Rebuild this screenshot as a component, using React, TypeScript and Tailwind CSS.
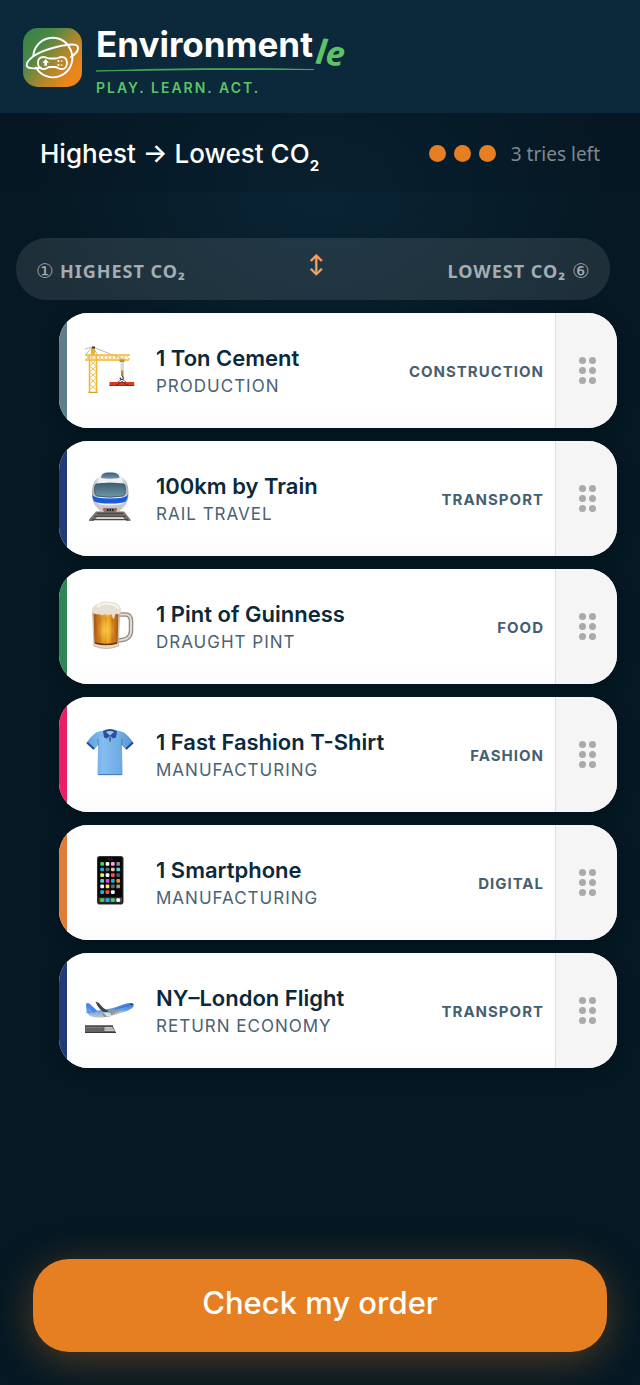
import { useState } from "react";
import type { ReactNode } from "react";
import clsx from "clsx";

interface Item {
  id: string;
  title: string;
  detail: string;
  category: string;
  accent: string;
  icon: ReactNode;
}

function CraneIcon() {
  return (
    <svg viewBox="0 0 50 50" className="size-[50px]" fill="none" aria-hidden>
      <path d="M0 6 7.7 4 38 16M7.7 4 1 11M7.7 4l5 8" stroke="#9a9a92" strokeWidth="0.7" />
      <path d="M6 4.500h4v8H6z" fill="#e9b32f" />
      <path d="M7 3.500h3v2H7z" fill="#3c3c34" />
      <path d="M0 12h45M0 17h44M4.500 12v38M11.500 12v38" stroke="#efb52f" strokeWidth="1.500" />
      <path
        d="m1 12 4 5 4-5 4 5 4-5 4 5 4-5 4 5 4-5 4 5 4-5 4 5M1 17l4-5 4 5 4-5 4 5 4-5 4 5 4-5 4 5 4-5 4 5M4.500 17l7 6-7 6 7 6-7 6 7 6M11.500 17l-7 6 7 6-7 6 7 6-7 6"
        stroke="#f0c258"
        strokeWidth="1"
      />
      <path d="M3.500 49.500h9" stroke="#d99f25" strokeWidth="1.500" />
      <path d="M35.500 18h3.500v10h-3.500z" fill="#dadada" />
      <path d="M34.500 16.500h5v2.500h-5z" fill="#c88b25" />
      <path d="M36 27.500h2.500V33H36z" fill="#b98d20" />
      <path d="M37.300 33c2 2 .7 3.800-.6 3.500-1.200 0-1.800-1-1.200-2" stroke="#333" strokeWidth="1.200" />
      <path d="m37 36-8 6M37 36l8 6" stroke="#3d3d3d" strokeWidth="0.8" />
      <path d="M24.500 39h24.700v4H24.500z" fill="#d8391f" />
      <path d="M24.500 42.500h24.700" stroke="#9f2413" />
      <path d="m31 42.500 6-4 6 4" stroke="#6b2a20" />
    </svg>
  );
}

function TrainIcon() {
  return (
    <svg viewBox="0 0 50 50" className="size-[50px]" aria-hidden>
      <defs>
        <linearGradient id="train-body" x1="0" x2="1">
          <stop stopColor="#a9abb0" />
          <stop offset=".2" stopColor="#f0f0f3" />
          <stop offset=".8" stopColor="#f0f0f3" />
          <stop offset="1" stopColor="#a2a4a9" />
        </linearGradient>
        <linearGradient id="train-glass" x2="0" y2="1">
          <stop stopColor="#3d5f70" />
          <stop offset="1" stopColor="#6d97a9" />
        </linearGradient>
      </defs>
      <path d="M11 40.500h28l6.500 8v1.500h-4L38 46H12l-3.500 4H4v-1.500z" fill="#77736d" />
      <path d="M12 42.500h26M9.500 45.500h31M7 48.500h36" stroke="#4d4944" strokeWidth="1.300" />
      <path
        d="M25 .7c7 0 10 1 11.500 5 5 3.300 7 8 7 17 0 8-4 14-9 17.300h-19C10.500 36.500 7 31 7 23c0-9 2-14 7-17.300C15.500 1.700 18 .7 25 .7Z"
        fill="url(#train-body)"
      />
      <path d="M16 7c.5-4 2-5.500 9-5.500S34 3 34.500 7c-6 1-13 1-18.500 0Z" fill="url(#train-glass)" />
      <path
        d="M11 13q14-2 28 0 1.500 1 1.500 6.500 0 4-2 5.500-13.500 2.500-27 0-2-1.500-2-5.500 0-5.500 1.500-6.500Z"
        fill="url(#train-glass)"
        stroke="#34505f"
        strokeWidth=".8"
      />
      <path d="M7.200 24q3 3.500 17.800 3.500T43 24q-.5 4.500-2.500 6.500-4 2-15.500 2t-15.500-2Q7.500 28.500 7.200 24Z" fill="#1c5bd8" />
      <path d="M10 32q6 2.500 15 2.500T40.500 32q-2 5-6 8h-19q-4-3-5.500-8Z" fill="#c7c8cd" />
      <path d="M18 37h14l-1 4H19z" fill="#77777a" />
      <path d="M22 38h1.500v2H22zm2.500 0H26v2h-1.500zm2.500 0h1.500v2H27z" fill="#222" />
      <circle cx="19.300" cy="38.500" r="1.300" fill="#e4502f" />
      <circle cx="30.700" cy="38.500" r="1.300" fill="#e4502f" />
    </svg>
  );
}

function BeerIcon() {
  return (
    <svg viewBox="0 0 50 50" className="size-[50px]" fill="none" aria-hidden>
      <defs>
        <linearGradient id="beer" x1="0" x2="1">
          <stop stopColor="#9f4f13" />
          <stop offset=".25" stopColor="#d98420" />
          <stop offset=".55" stopColor="#f0b02e" />
          <stop offset=".8" stopColor="#d17c1c" />
          <stop offset="1" stopColor="#a5541a" />
        </linearGradient>
        <radialGradient id="beer-glow">
          <stop stopColor="#ffd044" stopOpacity=".8" />
          <stop offset="1" stopColor="#ffd044" stopOpacity="0" />
        </radialGradient>
      </defs>
      <path d="M33 15.500h7.500q5 0 5.500 6v10q0 5-3.500 7.500-2.500 2-9.500 2.500" stroke="#958b7f" strokeWidth="4.500" />
      <path d="M33 15.500h7.500q5 0 5.500 6v10q0 5-3.500 7.500-2.500 2-9.500 2.500" stroke="#e2ddd5" strokeWidth="2" />
      <path d="M7.500 13h27l-1 34q-6 2.500-12.500 2.500T9 47Z" fill="#e2d8ca" stroke="#a69b8d" strokeWidth=".6" />
      <path d="M8.500 13h25l-.8 31q-6 2-11.700 2t-11.500-2Z" fill="url(#beer)" />
      <path d="M15 18v26M21 18v27M27 18v26" stroke="#9c5412" strokeOpacity=".45" />
      <ellipse cx="21" cy="31" rx="9" ry="12" fill="url(#beer-glow)" />
      <path d="M10 44q11 3 22 0" stroke="#71340f" strokeWidth="1.500" />
      <path
        d="M7 13c-1-4 2-7 6-8 3-3 8-3.500 13-2 5 0 9 3 10 7 .5 3-1 5-2.500 5.500-1.500-1-2.500-1-3.500.5L29 20q-1.500 0-2-4c-2-1.500-3 1-5 0-2.500-2-4 1-6 0-2-1.500-3 0-5-1-1.500-.5-3 0-4-2Z"
        fill="#e8dfd3"
      />
      <path d="M12 8q6-5 14-3 5 1 8 5" stroke="#f8f4ee" strokeWidth="2" />
    </svg>
  );
}

function ShirtIcon() {
  return (
    <svg viewBox="0 0 50 50" className="size-[50px]" fill="none" aria-hidden>
      <defs>
        <linearGradient id="shirt" x1="0" x2="1">
          <stop stopColor="#5e9edb" />
          <stop offset=".35" stopColor="#84bdef" />
          <stop offset=".7" stopColor="#6fade5" />
          <stop offset="1" stopColor="#5794cf" />
        </linearGradient>
      </defs>
      <path
        d="M18 3.500 12 5Q8 7 1.700 15.500L9 22.500l4-4L12.500 47q0 1.300 1.500 1.300h22q1.500 0 1.500-1.300L37 18.500l4 4 7.300-7Q42 7 38 5l-6-1.500Z"
        fill="url(#shirt)"
      />
      <path d="m2 15.500 7 6.500M48 15.500 41 22" stroke="#23499b" strokeWidth="2" />
      <path d="M13.500 18q-1-4-.5-6M36.500 18q1-4 .5-6" stroke="#4177b3" strokeWidth=".8" />
      <path d="M18 4Q25 0 32 4l-1 6.500-3 1-3-3-3 3-3-1Z" fill="#27509f" />
      <path d="M21 5q4-2 8 0l-4 3.500Z" fill="#9fc8ee" />
      <path d="M25 9v6" stroke="#3e72b0" strokeWidth="1.500" />
      <circle cx="25" cy="12" r=".7" fill="#183c74" />
      <path d="M13 47.500h24" stroke="#477fbd" />
    </svg>
  );
}

const APP_TILES = [
  ["#3fd35d", "#f5f5f5", "#f0a6ef", "#8c8c8c"],
  ["#16b5f1", "#666666", "#efc5a4", "#49d8ef"],
  ["#f7e84f", "#f5f5f5", "#f2524a", "#555555"],
  ["#43d8e2", "#e246e5", "#17aef1", "#fb9215"],
  ["#f5f5f5", "#f7e84f", "#666666", "#999999"],
  ["#16b5f1", "#f2524a", "#f5f5f5"],
];
const DOCK_TILES = ["#3fd35d", "#16b5f1", "#3fd35d", "#f5f5f5"];

function PhoneIcon() {
  return (
    <svg viewBox="0 0 50 50" className="size-[50px]" aria-hidden>
      <rect x="12" y="1" width="26.500" height="48.600" rx="2.800" fill="#343434" />
      <rect x="13" y="2" width="24.500" height="46.600" rx="2" fill="#080808" />
      <path d="M22.500 4h5" stroke="#333" />
      {APP_TILES.map((row, r) =>
        row.map((fill, c) => (
          <rect key={`${r}-${c}`} x={15.3 + c * 5.35} y={7 + r * 5.65} width="3.700" height="3.700" rx="1" fill={fill} />
        ))
      )}
      <rect x="13.500" y="42.500" width="23.500" height="5" fill="#454545" />
      {DOCK_TILES.map((fill, c) => (
        <rect key={c} x={15.3 + c * 5.35} y="43.200" width="3.700" height="3.700" rx="1" fill={fill} />
      ))}
    </svg>
  );
}

function PlaneIcon() {
  return (
    <svg viewBox="0 0 50 50" className="size-[50px]" fill="none" aria-hidden>
      <defs>
        <linearGradient id="plane" x2="0" y2="1">
          <stop stopColor="#3777dc" />
          <stop offset=".5" stopColor="#699fe8" />
          <stop offset="1" stopColor="#c3c8c9" />
        </linearGradient>
      </defs>
      <path
        d="M1 20.500h3l8 7q14-1.500 22-4.500 9-3.500 13.500-2.800 2 1 1 3.300-2 3-10 5.500-11 4-22 5.500-8 .5-12-2l-3-3Z"
        fill="url(#plane)"
      />
      <path d="M1 20.500h3l8 7.500-4 2Z" fill="#4585ee" />
      <path d="M3 31q11 3 22 0l15-4q-7 5-20 7-10 1-17-3Z" fill="#b9c1bd" />
      <path d="m10.500 18.500 3.500 1.500q3 5 10 8l-4 2q-7-4-9.500-11.500Z" fill="#3d444b" />
      <path d="m17 31 12-4.500h6L25 33.500l-6 .5Z" fill="#8d979d" />
      <path d="m18 29 7 1 2 3-5 .5Z" fill="#dae1e5" />
      <path d="m30 26 14-3.500" stroke="#1f4c9b" strokeWidth=".8" strokeDasharray="1 1" />
      <path d="m45 21 3 .5" stroke="#1a2f54" strokeWidth="1.200" />
      <path d="m4 28-3 1.500 6 .5" fill="#4e8ae6" />
      <path d="M0 42.500h27.500L31 50H0Z" fill="#636363" />
      <path d="M19.500 44H27l2.500 4h-10Z" fill="#c9c9c9" />
      <path d="M1 44.500h17M20 46h8" stroke="#8c8c8c" strokeWidth=".7" />
      <path d="M0 49.500h31M0 43h28" stroke="#393939" />
    </svg>
  );
}

const ITEMS: Item[] = [
  { id: "cement", title: "1 Ton Cement", detail: "Production", category: "Construction", accent: "bg-[#607d8b]", icon: <CraneIcon /> },
  { id: "train", title: "100km by Train", detail: "Rail travel", category: "Transport", accent: "bg-[#203b75]", icon: <TrainIcon /> },
  { id: "guinness", title: "1 Pint of Guinness", detail: "Draught pint", category: "Food", accent: "bg-[#2e8555]", icon: <BeerIcon /> },
  { id: "tshirt", title: "1 Fast Fashion T-Shirt", detail: "Manufacturing", category: "Fashion", accent: "bg-[#e91e63]", icon: <ShirtIcon /> },
  { id: "phone", title: "1 Smartphone", detail: "Manufacturing", category: "Digital", accent: "bg-[#e07b39]", icon: <PhoneIcon /> },
  { id: "flight", title: "NY–London Flight", detail: "Return economy", category: "Transport", accent: "bg-[#203b75]", icon: <PlaneIcon /> },
];

function Logo() {
  return (
    <svg viewBox="0 0 59 59" className="size-[59px] shrink-0" fill="none" aria-hidden>
      <defs>
        <linearGradient id="logo-bg" x1="0" y1=".1" x2="1" y2=".9">
          <stop stopColor="#378246" />
          <stop offset=".3" stopColor="#4b8946" />
          <stop offset=".6" stopColor="#b4862c" />
          <stop offset=".85" stopColor="#ea861a" />
        </linearGradient>
      </defs>
      <rect width="59" height="59" rx="15" fill="url(#logo-bg)" />
      <g stroke="#fff" strokeWidth="1.900" strokeLinecap="round">
        {/* planet, then its ring */}
        <path d="M10.300 27.500A19.500 19.500 0 0 1 45.300 17.500M48 22.500A19.500 19.500 0 0 1 13 39.500" />
        <path d="M45.300 17.500 48 22.500" />
        <path d="M10.300 28.300Q3 34 3.700 37.500c.5 3.500 7 3.200 14.300 2.200M10.300 28.300c5.500-3.700 12-6.300 19.400-8.300 10-2.800 23.300-5 25-1.500 1.500 3.500-2.200 7.500-6.700 10.500" />
        <path
          d="M20.500 29c2.500 0 3.500 1.500 6 1.500h6c2.500 0 3.500-1.500 6-1.500 3.500 0 5.500 2.500 5.500 6s-2 6.200-5.500 6.200c-3 0-4-2.200-6.500-2.200h-5c-2.500 0-3.500 2.200-6.500 2.200-3.500 0-5.500-2.700-5.500-6.200s2-6 5.500-6Z"
          strokeWidth="1.800"
        />
      </g>
      <path d="m22.700 31 3.300 3.700h-2v3h-2.600v-3h-2z" fill="#fff" />
      <g fill="#fff">
        <circle cx="35.500" cy="33" r="1.100" />
        <circle cx="35.500" cy="37" r="1.100" />
        <circle cx="38.800" cy="33" r=".8" />
        <circle cx="38.800" cy="37" r=".8" />
      </g>
    </svg>
  );
}

function Header() {
  return (
    <header className="flex h-[113px] items-center bg-[#0b293b] px-[23px] pt-0.5">
      <a href="#home" className="flex items-center gap-[14px]">
        <Logo />
        <span className="flex flex-col pt-1">
          <span className="flex items-end font-['Inter'] text-[35px] leading-[44px] font-bold text-white">
            Environment
            <span className="ml-[3px] rotate-6 font-['Open_Sans'] text-[34px] leading-7 font-bold text-[#5cc466] italic">
              le
            </span>
          </span>
          <svg viewBox="0 0 218 4" className="mt-0.5 h-1 w-[218px]" fill="none" aria-hidden>
            <path d="M0 3Q109-1 218 1.500 109 .8 0 3Z" fill="#4cab5a" stroke="#4cab5a" strokeWidth=".8" />
          </svg>
          <span className="mt-1.5 font-['Inter'] text-[14px] leading-5 font-semibold tracking-[2px] text-[#5cc466]">
            PLAY. LEARN. ACT.
          </span>
        </span>
      </a>
    </header>
  );
}

function TriesLeft({ count }: { count: number }) {
  return (
    <div className="flex items-center gap-2">
      {Array.from({ length: count }, (_, i) => (
        <span key={i} className="size-[17px] rounded-full bg-[#e67e22]" />
      ))}
      <span className="ml-[7px] font-['Noto_Sans'] text-[19px] leading-6 text-[#7d8991]">{count} tries left</span>
    </div>
  );
}

interface ItemCardProps {
  item: Item;
  dragging: boolean;
  onDragStart: () => void;
  onDragOver: () => void;
  onDragEnd: () => void;
}

function ItemCard({ item, dragging, onDragStart, onDragOver, onDragEnd }: ItemCardProps) {
  return (
    <li
      draggable
      onDragStart={onDragStart}
      onDragOver={(e) => {
        e.preventDefault();
        onDragOver();
      }}
      onDragEnd={onDragEnd}
      className={clsx(
        "flex h-[115px] overflow-hidden rounded-[29px] bg-white shadow-[0_4px_16px_rgba(0,0,0,0.25)]",
        dragging && "opacity-60"
      )}
    >
      <span className={clsx("w-2 shrink-0", item.accent)} />
      <div className="flex min-w-0 flex-1 items-center bg-linear-to-b from-white from-80% to-[#fbfbfb] pr-[11px] pl-[18px]">
        <span className="shrink-0 pb-1.5">{item.icon}</span>
        <div className="ml-[21px] min-w-0 flex-1 pt-0.5 font-['Inter']">
          <h2 className="truncate text-[22px] leading-7 font-semibold text-[#0b293b]">{item.title}</h2>
          <p className="text-[17px] leading-7 tracking-[1px] text-[#4a6275] uppercase">{item.detail}</p>
        </div>
        <span className="pt-0.5 font-['Inter'] text-[15px] leading-6 font-bold tracking-[1px] text-[#455f72] uppercase">
          {item.category}
        </span>
      </div>
      <button
        type="button"
        aria-label={`Move ${item.title}`}
        className="flex w-[62px] shrink-0 cursor-grab items-center justify-center border-l border-[#dedede] bg-[#f5f5f5]"
      >
        <span className="grid grid-cols-2 gap-[3px] pl-0.5">
          {Array.from({ length: 6 }, (_, i) => (
            <span key={i} className="size-[7px] rounded-full bg-[#aaaaaa]" />
          ))}
        </span>
      </button>
    </li>
  );
}

export default function App() {
  const [items, setItems] = useState(ITEMS);
  const [draggedId, setDraggedId] = useState<string | null>(null);

  function moveOver(targetId: string) {
    if (!draggedId || draggedId === targetId) return;
    const next = items.filter((i) => i.id !== draggedId);
    const dragged = items.find((i) => i.id === draggedId);
    if (!dragged) return;
    next.splice(items.findIndex((i) => i.id === targetId), 0, dragged);
    setItems(next);
  }

  return (
    <div className="flex min-h-screen flex-col bg-[#051823]">
      <Header />
      <main className="flex flex-1 flex-col bg-[radial-gradient(300px_220px_at_50%_80px,#0a2434,transparent)]">
        <div className="flex h-[79px] items-center justify-between bg-[#051823]/30 px-10 pt-0.5">
          <h1 className="font-['Inter'] text-[26px] leading-9 font-medium text-white">
            Highest → Lowest CO
            <sub className="-bottom-2 text-[15px] font-bold">2</sub>
          </h1>
          <TriesLeft count={3} />
        </div>

        <div className="mt-[46px] mr-[30px] ml-4 flex h-[62px] items-center justify-between rounded-[31px] bg-white/10 px-5 font-['Noto_Sans'] text-[18px] font-bold tracking-[1px] text-[#a4adb2]">
          <span className="flex items-center gap-1.5 pt-1">
            <span className="font-['DejaVu_Sans'] text-[20px] leading-6 font-normal tracking-normal">①</span>
            HIGHEST CO₂
          </span>
          <span className="pb-2 font-['Inter'] text-[19px] text-[#f4a261]">↕</span>
          <span className="flex items-center gap-1.5 pt-1">
            LOWEST CO₂
            <span className="font-['DejaVu_Sans'] text-[20px] leading-6 font-normal tracking-normal">⑥</span>
          </span>
        </div>

        <ol className="mt-[13px] mr-[23px] ml-[59px] flex flex-col gap-[13px]">
          {items.map((item) => (
            <ItemCard
              key={item.id}
              item={item}
              dragging={item.id === draggedId}
              onDragStart={() => setDraggedId(item.id)}
              onDragOver={() => moveOver(item.id)}
              onDragEnd={() => setDraggedId(null)}
            />
          ))}
        </ol>

        <div className="mt-auto px-[33px] pt-8 pb-[33px]">
          <button
            type="button"
            className="h-[93px] w-full rounded-[36px] bg-[#e67e22] pb-1 font-['Inter'] text-[31px] font-medium text-white shadow-[0_8px_40px_rgba(230,126,34,0.35)]"
          >
            Check my order
          </button>
        </div>
      </main>
    </div>
  );
}
